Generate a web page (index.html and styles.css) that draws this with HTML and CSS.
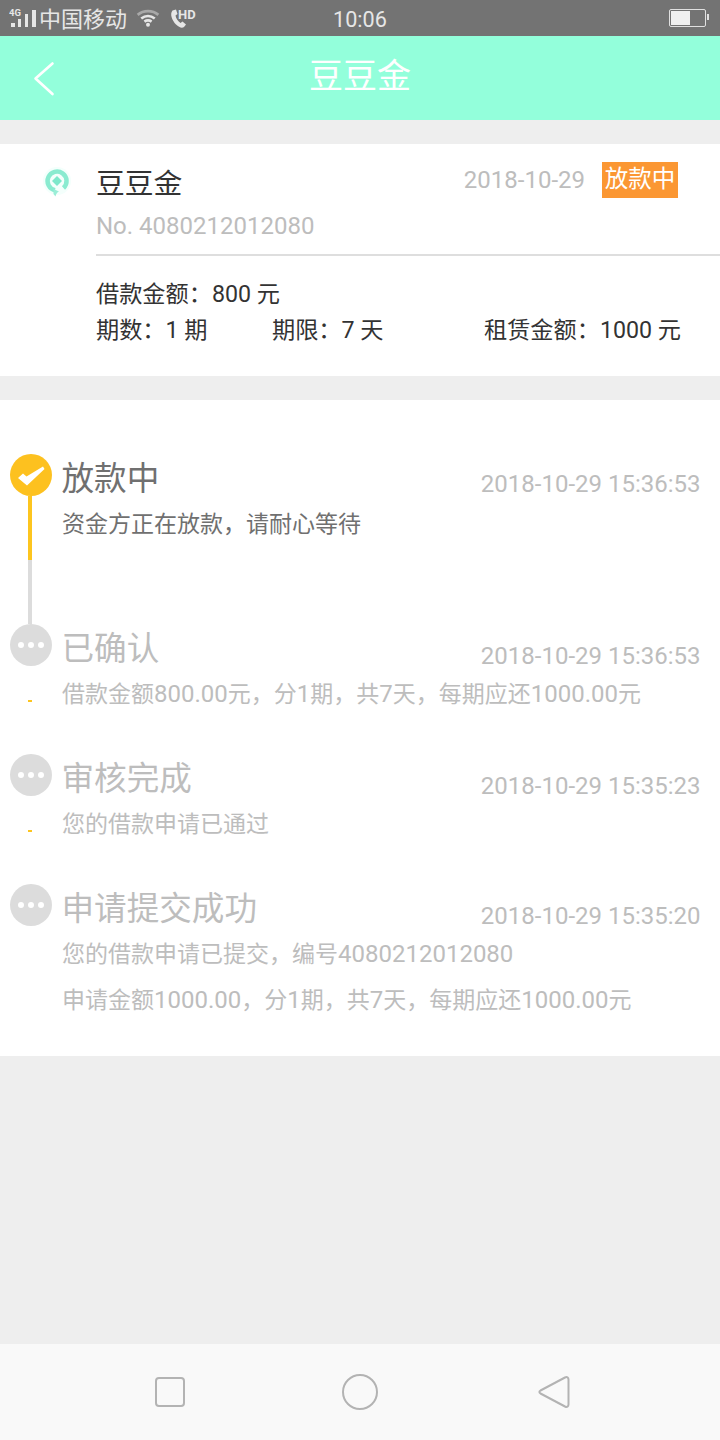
FILE: index.html
```html
<!DOCTYPE html>
<html lang="zh">
<head>
<meta charset="utf-8">
<title>豆豆金</title>
<link rel="stylesheet" href="styles.css">
</head>
<body>
<div class="screen">
  <div class="statusbar">
    <div class="sb-left">
      <svg class="sb-signal" width="31" height="24" viewBox="0 0 31 24">
        <text x="0" y="10" class="sb-4g">4G</text>
        <rect x="2" y="17" width="4" height="4" fill="#e6e6e6"/>
        <rect x="9" y="13" width="3" height="8" fill="#e6e6e6"/>
        <rect x="16" y="8" width="3" height="13" fill="#e6e6e6"/>
        <rect x="23" y="4" width="4" height="17" fill="#e6e6e6"/>
      </svg>
      <span class="carrier">中国移动</span>
      <svg class="sb-wifi" width="24" height="18" viewBox="0 0 26 20" fill="none">
        <path d="M1.500 6.500C8 1 18 1 24.500 6.500" stroke="#a8a8a8" stroke-width="3"/>
        <path d="M5.500 10.500C10 7 16 7 20.500 10.500" stroke="#e6e6e6" stroke-width="3"/>
        <path d="M9 14C11.500 12.300 14.500 12.300 17 14" stroke="#e6e6e6" stroke-width="3"/>
        <circle cx="13" cy="17.500" r="2.200" fill="#e6e6e6"/>
      </svg>
      <svg class="sb-call" width="28" height="22" viewBox="0 0 28 22">
        <path d="M3.500 2.500 L7 1.500 L8.500 6 L6.500 7.500 C7 10.500 9 13.500 11.500 15 L13.500 13.500 L17 16.500 L15 19 C13 20.500 10 19.500 7 16.500 C3 12.500 0.500 6 3.500 2.500Z" fill="#e6e6e6"/>
        <text x="9" y="11" class="sb-hd">HD</text>
      </svg>
    </div>
    <span class="clock">10:06</span>
    <div class="battery"><div class="battery-level"></div></div>
  </div>

  <header class="appbar">
    <svg class="back" width="24" height="36" viewBox="0 0 24 36" fill="none">
      <path d="M20.500 2.500L3.500 17.500L20.500 33" stroke="#fff" stroke-width="2.600" stroke-linecap="round" stroke-linejoin="round"/>
    </svg>
    <h1 class="appbar-title">豆豆金</h1>
  </header>

  <section class="card">
    <div class="card-icon">
      <svg width="28" height="34" viewBox="0 0 28 34" fill="none">
        <circle cx="14" cy="15" r="14" fill="#f4fffc"/>
        <path d="M20.500 22A9.500 9.500 0 1 0 12 24.300" stroke="#8aebd0" stroke-width="4.500"/>
        <path d="M10.500 23L16 25.500C14 26.500 13 28 12.500 30.500L10.500 28Z" fill="#9aeed7"/>
        <path d="M14 10L19 15L14 20L9 15Z" fill="#7ee8cb"/>
      </svg>
    </div>
    <div class="card-main">
      <div class="card-head">
        <div class="card-name">豆豆金</div>
        <div class="card-date">2018-10-29</div>
        <div class="tag">放款中</div>
      </div>
      <div class="card-no">No. 4080212012080</div>
      <div class="card-rule"></div>
      <div class="card-amount">借款金额：800 元</div>
      <div class="card-terms">
        <span class="term-a">期数：1 期</span>
        <span class="term-b">期限：7 天</span>
        <span class="term-c">租赁金额：1000 元</span>
      </div>
    </div>
  </section>

  <section class="timeline">
    <article class="step step-active">
      <div class="rail">
        <div class="dot dot-on">
          <svg width="28" height="24" viewBox="0 0 28 24"><path d="M1 15L6 10.500L9.500 13.500L26 3.500L27.500 6L10 22.500Z" fill="#fff"/></svg>
        </div>
        <div class="line-yellow"></div>
        <div class="line-grey"></div>
      </div>
      <div class="step-body">
        <div class="step-head"><h2 class="step-title">放款中</h2><time class="step-time">2018-10-29 15:36:53</time></div>
        <p class="step-text">资金方正在放款，请耐心等待</p>
      </div>
    </article>
    <article class="step">
      <div class="rail">
        <div class="dot"><i></i><i></i><i></i></div>
        <div class="dash"></div>
      </div>
      <div class="step-body">
        <div class="step-head"><h2 class="step-title">已确认</h2><time class="step-time">2018-10-29 15:36:53</time></div>
        <p class="step-text">借款金额<span class="num">800.00</span>元，分<span class="num">1</span>期，共<span class="num">7</span>天，每期应还<span class="num">1000.00</span>元</p>
      </div>
    </article>
    <article class="step">
      <div class="rail">
        <div class="dot"><i></i><i></i><i></i></div>
        <div class="dash"></div>
      </div>
      <div class="step-body">
        <div class="step-head"><h2 class="step-title">审核完成</h2><time class="step-time">2018-10-29 15:35:23</time></div>
        <p class="step-text">您的借款申请已通过</p>
      </div>
    </article>
    <article class="step step-last">
      <div class="rail">
        <div class="dot"><i></i><i></i><i></i></div>
      </div>
      <div class="step-body">
        <div class="step-head"><h2 class="step-title">申请提交成功</h2><time class="step-time">2018-10-29 15:35:20</time></div>
        <p class="step-text">您的借款申请已提交，编号<span class="num">4080212012080</span></p>
        <p class="step-text step-text-2">申请金额<span class="num">1000.00</span>，分<span class="num">1</span>期，共<span class="num">7</span>天，每期应还<span class="num">1000.00</span>元</p>
      </div>
    </article>
  </section>

  <div class="spacer"></div>

  <nav class="navbar">
    <svg width="32" height="32" viewBox="0 0 32 32" fill="none"><rect x="2" y="2" width="28" height="28" rx="3" stroke="#b3b3b3" stroke-width="2"/></svg>
    <svg width="36" height="36" viewBox="0 0 36 36" fill="none"><circle cx="18" cy="18" r="17" stroke="#b3b3b3" stroke-width="2"/></svg>
    <svg width="32" height="36" viewBox="0 0 32 36" fill="none"><path d="M27 3.500C29 2.500 30.500 3.500 30.500 5.500V30.500C30.500 32.500 29 33.500 27 32.500L2.500 19.500C1 18.500 1 17.500 2.500 16.500Z" stroke="#b3b3b3" stroke-width="2" stroke-linejoin="round"/></svg>
  </nav>
</div>
</body>
</html>
```
FILE: styles.css
```css
* { box-sizing: border-box; margin: 0; padding: 0; }
html, body { width: 720px; height: 1440px; overflow: hidden; }
body { font-family: Roboto, "Noto Sans CJK SC", sans-serif; background: #eeeeee; }
.screen { width: 720px; height: 1440px; display: flex; flex-direction: column; }

.statusbar { height: 36px; flex: none; background: #737373; position: relative; display: flex; align-items: center; color: #e6e6e6; padding-left: 9px; }
.sb-left { display: flex; align-items: center; }
.sb-signal { display: block; }
.sb-4g { font: bold 9.500px Roboto, sans-serif; fill: #e6e6e6; }
.sb-hd { font: bold 13px Roboto, sans-serif; fill: #e6e6e6; }
.carrier { font-size: 22px; line-height: 36px; margin: 3px 0 0 -1px; }
.sb-wifi { margin-left: 9px; display: block; }
.sb-call { margin-left: 9px; display: block; margin-top: 2px; }
.clock { position: absolute; left: 333px; top: 6px; font-size: 21.600px; line-height: 28px; }
.battery { position: absolute; left: 669px; top: 9px; width: 37px; height: 18px; border: 1.500px solid #e0e0e0; border-radius: 2px; padding: 0.500px 1px; }
.battery::after { content: ""; position: absolute; left: 36.500px; top: 4px; width: 2px; height: 6px; background: #e0e0e0; }
.battery-level { width: 19px; height: 14px; background: #f0f0f0; }

.appbar { height: 84px; flex: none; background: #93ffdb; display: flex; align-items: center; justify-content: center; position: relative; }
.back { position: absolute; left: 32px; top: 25px; }
.appbar-title { font-size: 34px; font-weight: 400; color: #fff; line-height: 84px; margin-top: -4px; }

.card { margin-top: 24px; height: 232px; flex: none; background: #fff; display: flex; }
.card-icon { width: 96px; flex: none; padding: 22px 0 0 43px; }
.card-main { flex: 1; display: flex; flex-direction: column; }
.card-head { display: flex; align-items: flex-start; height: 54px; }
.card-name { font-size: 28.800px; line-height: 40px; color: #333; margin-top: 20px; flex: 1; }
.card-date { font-size: 24px; line-height: 32px; color: #bdbdbd; margin-top: 20px; }
.tag { width: 76px; height: 36px; margin: 18px 42px 0 17px; background: #fb9733; color: #fff; font-size: 23.500px; line-height: 34px; text-align: center; }
.card-no { font-size: 24px; line-height: 32px; color: #bdbdbd; margin-top: 12px; }
.card-rule { height: 2px; background: #dedede; margin-top: 12px; }
.card-amount { font-size: 23.200px; line-height: 32px; color: #333; margin-top: 22px; }
.card-terms { display: flex; font-size: 23.200px; line-height: 32px; color: #333; margin-top: 4px; }
.term-a { width: 176px; }
.term-b { width: 212px; }

.timeline { margin-top: 24px; height: 656px; flex: none; background: #fff; padding-top: 54px; }
.step { display: flex; height: 130px; }
.step-active { height: 170px; }
.step-last { height: auto; }
.rail { width: 52px; flex: none; padding-left: 10px; display: flex; flex-direction: column; }
.dot { width: 42px; height: 42px; border-radius: 50%; background: #dcdcdc; display: flex; align-items: center; justify-content: center; gap: 4px; flex: none; }
.dot i { width: 6px; height: 6px; border-radius: 50%; background: #fff; }
.dot-on { background: #fdc11f; }
.line-yellow { width: 4px; height: 64px; background: #fdc51f; margin-left: 18px; flex: none; }
.line-grey { width: 4px; height: 64px; background: #dcdcdc; margin-left: 18px; flex: none; }
.dash { width: 4px; height: 2px; background: #fdc51f; margin: 34px 0 0 18px; flex: none; }
.step-body { flex: 1; padding-left: 10px; padding-right: 19.500px; }
.step-head { display: flex; justify-content: space-between; align-items: flex-start; height: 50px; }
.step-title { font-size: 32.600px; font-weight: 400; line-height: 48px; color: #bdbdbd; margin: 1px 0 0 -0.500px; }
.step-active .step-title { color: #707070; }
.step-time { font-size: 24px; line-height: 32px; color: #bdbdbd; margin-top: 16px; }
.step-active .step-time { margin-top: 14px; }
.step-text { font-size: 23px; line-height: 32px; color: #bdbdbd; margin-top: 5px; }
.step-text .num { font-size: 24px; line-height: 0; }
.step-active .step-text { color: #707070; }
.step-text-2 { margin-top: 14px; }

.spacer { flex: 1; }
.navbar { height: 96px; flex: none; background: #f9f9f9; display: grid; grid-template-columns: 154px 32px 156px 36px 160px 32px; align-items: center; }
.navbar svg:nth-child(1) { grid-column: 2; }
.navbar svg:nth-child(2) { grid-column: 4; }
.navbar svg:nth-child(3) { grid-column: 6; }
```
